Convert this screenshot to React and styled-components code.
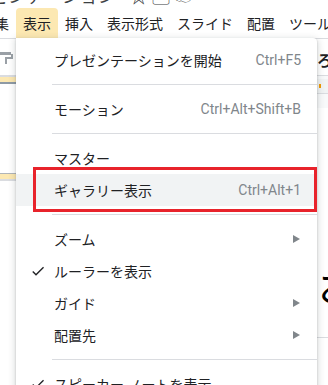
import React from 'react';
import styled, { createGlobalStyle } from 'styled-components';

const GlobalStyle = createGlobalStyle`
  html, body {
    margin: 0;
    padding: 0;
    background: #fff;
  }
  body {
    font-family: Roboto, "Noto Sans CJK JP", sans-serif;
  }
`;

const S = {
  Page: styled.div`
    position: relative;
    width: 328px;
    height: 385px;
    overflow: hidden;
    background: #fff;
  `,
  TitleRow: styled.div`
    height: 8px;
    overflow: hidden;
  `,
  TitleText: styled.div`
    display: flex;
    gap: 14px;
    margin-top: -13px;
    margin-left: -10px;
    font-size: 18px;
    line-height: 20px;
    color: #3c4043;
    white-space: nowrap;
  `,
  MenuBar: styled.div`
    display: flex;
    height: 30px;
    margin-left: -26px;
  `,
  MenuTab: styled.div`
    display: flex;
    align-items: center;
    padding: 0 7px;
    font-size: 14px;
    color: #202124;
    white-space: nowrap;
    border-radius: 4px 4px 0 0;
    background: ${(p) => (p.$active ? '#fce8b2' : 'transparent')};
  `,
  Toolbar: styled.div`
    display: flex;
    justify-content: space-between;
    align-items: center;
    height: 36px;
    border-top: 1px solid #dadce0;
    border-bottom: 1px solid #dadce0;
  `,
  ToolGlyph: styled.span`
    margin-right: -4px;
    font-size: 15px;
    font-weight: 700;
    color: #202124;
    margin-top: 4px;
  `,
  Workspace: styled.div`
    display: flex;
  `,
  Filmstrip: styled.div`
    flex: none;
    width: 317px;
    display: flex;
    flex-direction: column;
  `,
  ThumbBand: styled.div`
    height: 5px;
    background: #fce8b2;
    border-top: 1px solid ${(p) => p.$over};
    border-bottom: 2px solid ${(p) => p.$under};
    margin-top: ${(p) => p.$gap}px;
  `,
  Canvas: styled.div`
    flex: 1;
    display: flex;
    flex-direction: column;
    background: #f8f9fa;
  `,
  Ruler: styled.div`
    position: relative;
    margin-top: 3px;
    height: 14px;
    background: #f1f3f4;
    border-bottom: 1px solid #dadce0;
  `,
  RulerTick: styled.span`
    position: absolute;
    left: 2px;
    top: 5px;
    width: 2px;
    height: 4px;
    background: #f29900;
  `,
  Slide: styled.div`
    margin-top: 14px;
    padding-top: 156px;
    background: #fff;
  `,
  SlideText: styled.div`
    font-family: "Noto Sans CJK JP", sans-serif;
    font-size: 40px;
    line-height: 40px;
    color: #000;
    padding-left: 1px;
    padding-bottom: 33px;
    border-bottom: 1px solid #dadce0;
    white-space: nowrap;
  `,
  Dropdown: styled.div`
    position: absolute;
    top: 38px;
    left: 16px;
    width: 301px;
    padding: 6px 0;
    background: #fff;
    border-radius: 0 4px 4px 4px;
    box-shadow: 0 2px 6px 2px rgba(60, 64, 67, 0.15), 0 1px 2px rgba(60, 64, 67, 0.3);
    z-index: 10;
  `,
  Item: styled.div`
    position: relative;
    display: flex;
    align-items: center;
    height: 32px;
    padding-right: 16px;
    font-size: 14px;
    color: #202124;
    background: ${(p) => (p.$hover ? '#f1f3f4' : 'transparent')};
  `,
  Gutter: styled.div`
    flex: none;
    width: 38px;
    padding-left: 14px;
    box-sizing: border-box;
    display: flex;
    align-items: center;
  `,
  Label: styled.span`
    flex: 1;
    white-space: nowrap;
  `,
  Shortcut: styled.span`
    font-family: Roboto, sans-serif;
    color: #80868b;
    white-space: nowrap;
  `,
  SubArrow: styled.span`
    width: 0;
    height: 0;
    margin-right: 1px;
    border-left: 7px solid #80868b;
    border-top: 4px solid transparent;
    border-bottom: 4px solid transparent;
  `,
  Separator: styled.div`
    height: 1px;
    margin: 8px 0 8px 36px;
    background: #dadce0;
  `,
  Highlight: styled.div`
    position: absolute;
    left: 17px;
    right: 0;
    top: -7px;
    bottom: -6px;
    border: 3px solid #e8232b;
    pointer-events: none;
  `,
};

const CheckIcon = () => (
  <svg width="16" height="16" viewBox="0 0 24 24">
    <path d="M9 16.17L4.83 12l-1.42 1.41L9 19 21 7l-1.41-1.41z" fill="#202124" />
  </svg>
);

const menus = ['編集', '表示', '挿入', '表示形式', 'スライド', '配置', 'ツール'];

const items = [
  { label: 'プレゼンテーションを開始', shortcut: 'Ctrl+F5' },
  { sep: true },
  { label: 'モーション', shortcut: 'Ctrl+Alt+Shift+B' },
  { sep: true },
  { label: 'マスター' },
  { label: 'ギャラリー表示', shortcut: 'Ctrl+Alt+1', hover: true, marked: true },
  { sep: true },
  { label: 'ズーム', sub: true },
  { label: 'ルーラーを表示', checked: true },
  { label: 'ガイド', sub: true },
  { label: '配置先', sub: true },
  { sep: true },
  { label: 'スピーカー ノートを表示', checked: true },
];

function MenuItem({ item }) {
  return (
    <S.Item $hover={item.hover}>
      <S.Gutter>{item.checked && <CheckIcon />}</S.Gutter>
      <S.Label>{item.label}</S.Label>
      {item.shortcut && <S.Shortcut>{item.shortcut}</S.Shortcut>}
      {item.sub && <S.SubArrow />}
      {item.marked && <S.Highlight />}
    </S.Item>
  );
}

function App() {
  return (
    <>
      <GlobalStyle />
      <S.Page>
        <S.TitleRow>
          <S.TitleText>
            <span>ゼンテーション</span>
            <span>☆ ▢ ☁</span>
          </S.TitleText>
        </S.TitleRow>
        <S.MenuBar>
          {menus.map((m) => (
            <S.MenuTab key={m} $active={m === '表示'}>{m}</S.MenuTab>
          ))}
        </S.MenuBar>
        <S.Toolbar>
          <svg width="14" height="16" viewBox="0 0 14 16">
            <path d="M0 3h11v2h2v5H7v5H5V8h6V6h-11z" fill="#9aa0a6" />
          </svg>
          <S.ToolGlyph>ろ</S.ToolGlyph>
        </S.Toolbar>
        <S.Workspace>
          <S.Filmstrip>
            <S.ThumbBand $over="#dadce0" $under="#8e9aa5" $gap={0} />
            <S.ThumbBand $over="#b0b4b8" $under="#dadce0" $gap={89} />
          </S.Filmstrip>
          <S.Canvas>
            <S.Ruler>
              <S.RulerTick />
            </S.Ruler>
            <S.Slide>
              <S.SlideText>お</S.SlideText>
            </S.Slide>
          </S.Canvas>
        </S.Workspace>
        <S.Dropdown>
          {items.map((item, i) => (item.sep ? <S.Separator key={i} /> : <MenuItem key={i} item={item} />))}
        </S.Dropdown>
      </S.Page>
    </>
  );
}

export default App;
